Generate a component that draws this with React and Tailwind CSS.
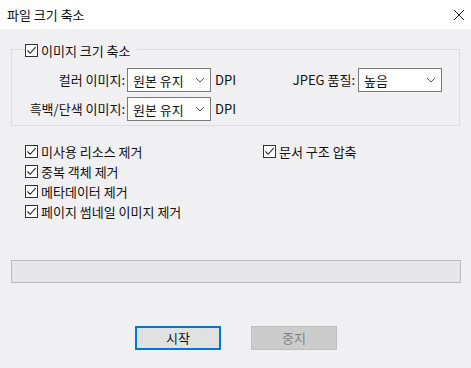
import React from 'react';

const FONT = { fontFamily: '"Noto Sans CJK KR", "Noto Sans", sans-serif' };

function CheckBox({ label, className = '' }) {
  return (
    <div className={`flex items-center h-[14px] ${className}`}>
      <div className="w-[13px] h-[13px] border border-[#333333] bg-white flex items-center justify-center shrink-0">
        <svg width="11" height="11" viewBox="0 0 11 11" fill="none">
          <path d="M1.5 5.5 L4.2 8.3 L9.6 2.2" stroke="#222" strokeWidth="1.1" />
        </svg>
      </div>
      <span className="ml-[3px] text-[13px] text-[#111] leading-none">{label}</span>
    </div>
  );
}

function Combo({ value, className = '' }) {
  return (
    <div className={`h-[24px] bg-white border border-[#7a7a7a] flex items-center justify-between pl-[5px] pr-[5px] ${className}`}>
      <span className="text-[13px] text-[#111] leading-none">{value}</span>
      <svg width="10" height="6" viewBox="0 0 10 6" fill="none">
        <path d="M1 1 L5 5 L9 1" stroke="#555" strokeWidth="1" />
      </svg>
    </div>
  );
}

export default function App() {
  return (
    <div className="w-[471px] h-[368px] bg-[#f0eff1] flex flex-col relative overflow-hidden" style={FONT}>
      {/* title bar */}
      <div className="h-[29px] bg-white flex items-center justify-between pl-[7px] pr-[6px]">
        <span className="text-[13px] text-[#111]">파일 크기 축소</span>
        <svg width="12" height="12" viewBox="0 0 12 12" fill="none">
          <path d="M1 1 L11 11 M11 1 L1 11" stroke="#222" strokeWidth="1" />
        </svg>
      </div>

      <div className="px-[11px]">
        {/* image group */}
        <div className="relative mt-[20px] h-[77px] border border-[#dcdbdd] pt-[18px]">
          <div className="absolute left-[13px] -top-[7px] bg-[#f0eff1] pr-[6px]">
            <CheckBox label="이미지 크기 축소" />
          </div>

          <div className="flex items-center h-[24px]">
            <span className="w-[113px] text-right text-[13px] text-[#111]">컬러 이미지:</span>
            <Combo value="원본 유지" className="ml-[2px] w-[84px]" />
            <span className="ml-[4px] text-[13px] text-[#111]">DPI</span>
            <span className="ml-auto text-[13px] text-[#111]">JPEG 품질:</span>
            <Combo value="높음" className="ml-[3px] mr-[17px] w-[84px]" />
          </div>
          <div className="flex items-center h-[24px] mt-[5px]">
            <span className="w-[113px] text-right text-[13px] text-[#111]">흑백/단색 이미지:</span>
            <Combo value="원본 유지" className="ml-[2px] w-[84px]" />
            <span className="ml-[4px] text-[13px] text-[#111]">DPI</span>
          </div>
        </div>

        {/* options */}
        <div className="flex mt-[18px] pl-[14px]">
          <div className="w-[238px] flex flex-col gap-[6px]">
            <CheckBox label="미사용 리소스 제거" />
            <CheckBox label="중복 객체 제거" />
            <CheckBox label="메타데이터 제거" />
            <CheckBox label="페이지 썸네일 이미지 제거" />
          </div>
          <div className="flex flex-col">
            <CheckBox label="문서 구조 압축" />
          </div>
        </div>

        {/* progress */}
        <div className="mt-[42px] h-[23px] w-[450px] border border-[#bcbcbc] bg-[#e6e5e7]" />

        {/* buttons */}
        <div className="flex mt-[43px] pl-[124px] gap-[30px]">
          <button className="w-[86px] h-[24px] border-2 border-[#0078d7] bg-[#e1e1e1] text-[13px] text-[#111]">
            시작
          </button>
          <button className="w-[86px] h-[24px] border border-[#bfbfbf] bg-[#cccccc] text-[13px] text-[#838383]">
            중지
          </button>
        </div>
      </div>
    </div>
  );
}
